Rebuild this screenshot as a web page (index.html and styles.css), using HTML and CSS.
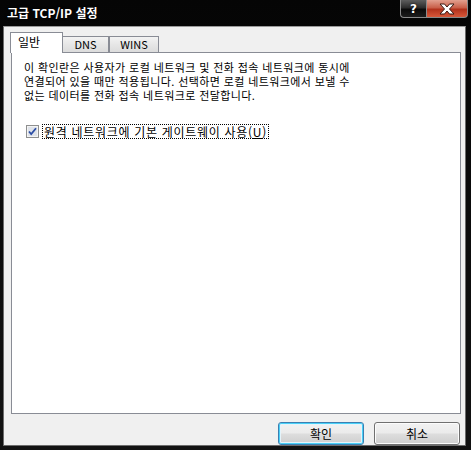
FILE: index.html
```html
<!DOCTYPE html>
<html lang="ko">
<head>
<meta charset="utf-8">
<title>고급 TCP/IP 설정</title>
<link rel="stylesheet" href="styles.css">
</head>
<body>
<div class="window">
  <div class="titlebar">
    <div class="title">고급 TCP/IP 설정</div>
    <div class="caption-btns">
      <div class="cbtn help"><span>?</span></div>
      <div class="cbtn close">
        <svg width="20" height="12" viewBox="0 0 20 12">
          <path d="M3 1 H7.5 L10 4 L12.5 1 H17 L12.5 6 L17 11 H12.5 L10 8 L7.5 11 H3 L7.5 6 Z" fill="#fff" stroke="#3a1a14" stroke-width="1" stroke-linejoin="round"/>
        </svg>
      </div>
    </div>
  </div>
  <div class="client">
    <div class="tabs">
      <div class="tab active">일반</div>
      <div class="tab first">DNS</div>
      <div class="tab">WINS</div>
    </div>
    <div class="panel">
      <p class="desc">이 확인란은 사용자가 로컬 네트워크 및 전화 접속 네트워크에 동시에<br>연결되어 있을 때만 적용됩니다. 선택하면 로컬 네트워크에서 보낼 수<br>없는 데이터를 전화 접속 네트워크로 전달합니다.</p>
      <div class="check-row">
        <span class="checkbox">
          <svg width="13" height="13" viewBox="0 0 13 13">
            <rect x="0.5" y="0.5" width="12" height="12" fill="#f4f4f4" stroke="#8e8f8f"/>
            <rect x="2" y="2" width="9" height="9" fill="#dfe3ea"/>
            <path d="M3 6.5 L5.2 9 L10 3.2" fill="none" stroke="#2c4ea5" stroke-width="1.8"/>
          </svg>
        </span>
        <span class="check-label">원격 네트워크에 기본 게이트웨이 사용(<u>U</u>)</span>
      </div>
    </div>
    <div class="buttons">
      <button class="btn default">확인</button>
      <button class="btn">취소</button>
    </div>
  </div>
</div>
</body>
</html>
```
FILE: styles.css
```css
* { box-sizing: border-box; }
html, body { margin: 0; padding: 0; }
body {
  width: 471px;
  height: 450px;
  background: #0e0e0e;
  overflow: hidden;
  font-family: "Noto Sans CJK KR", "Noto Sans", sans-serif;
}
.window {
  width: 471px;
  height: 450px;
  display: flex;
  flex-direction: column;
  padding: 0 5px 4px 3px;
  background: linear-gradient(#050505, #121212);
}
.titlebar {
  height: 26px;
  display: flex;
  justify-content: space-between;
  align-items: flex-start;
  flex: none;
}
.title {
  color: #fff;
  font-weight: bold;
  font-size: 12px;
  line-height: 14px;
  padding: 6px 0 0 4px;
  text-shadow: 0 0 3px #000;
}
.caption-btns {
  display: flex;
  margin-right: -2px;
}
.cbtn {
  height: 18px;
  border: 1px solid #8a8a8a;
  border-top: none;
  display: flex;
  align-items: center;
  justify-content: center;
}
.help {
  width: 26px;
  border-radius: 0 0 0 4px;
  border-right: none;
  background: linear-gradient(#5d5d5d 0%, #2c2c2c 45%, #0a0a0a 55%, #1c1c1c 100%);
}
.help span {
  color: #fff;
  font-family: "DejaVu Sans", sans-serif;
  font-weight: bold;
  font-size: 12px;
  line-height: 12px;
  text-shadow: 0 0 2px #000;
}
.close {
  width: 42px;
  border-radius: 0 0 4px 0;
  background: linear-gradient(#e2a08f 0%, #c9604a 45%, #b2321c 55%, #d7583a 100%);
}
.client {
  flex: 1;
  background: #f0f0f0;
  border: 1px solid #6c6c6c;
  border-top-color: #9a9a9a;
  padding: 4px 0 0 6px;
  display: flex;
  flex-direction: column;
}
.tabs {
  display: flex;
  align-items: flex-end;
  height: 21px;
  position: relative;
  z-index: 1;
}
.tab {
  height: 16px;
  border: 1px solid #898c95;
  border-bottom: none;
  background: linear-gradient(#f3f3f3, #e6e6e6 50%, #dcdcdc);
  font-family: "Noto Sans CJK KR", sans-serif;
  font-size: 11px;
  line-height: 14px;
  color: #000;
  padding: 0 8px;
  width: 50px;
  text-align: center;
}
.tab.first {
  width: 47px;
  margin-left: -1px;
}
.tab.active {
  width: 53px;
  height: 21px;
  margin-bottom: -1px;
  background: #fff;
  border-color: #898c95;
  font-size: 12px;
  line-height: 18px;
  text-align: left;
  padding-left: 7px;
  position: relative;
  z-index: 2;
}
.panel {
  width: 450px;
  height: 362px;
  margin-left: 1px;
  background: #fff;
  border: 1px solid #898c95;
  padding: 7px 0 0 12px;
}
.desc {
  margin: 0;
  font-size: 11px;
  line-height: 14px;
  letter-spacing: 0.4px;
  white-space: nowrap;
  color: #000;
}
.check-row {
  display: flex;
  align-items: center;
  margin-top: 22px;
  margin-left: 2px;
  gap: 3px;
}
.checkbox {
  display: flex;
  width: 13px;
  height: 13px;
}
.check-label {
  border: 1px dotted #000;
  font-size: 12px;
  line-height: 13px;
  letter-spacing: 0.7px;
  padding: 0 1px;
  color: #000;
  white-space: nowrap;
}
.buttons {
  display: flex;
  justify-content: flex-end;
  gap: 10px;
  margin-top: 8px;
  padding-right: 5px;
}
.btn {
  width: 86px;
  height: 23px;
  border: 1px solid #707070;
  border-radius: 3px;
  background: linear-gradient(#f2f2f2 0%, #ebebeb 48%, #dddddd 52%, #cfcfcf 100%);
  font-family: "Noto Sans CJK KR", sans-serif;
  font-size: 12px;
  line-height: 19px;
  color: #000;
  padding: 0;
  box-shadow: inset 0 0 0 1px #fcfcfc;
}
.btn.default {
  border-color: #3c7fb1;
  box-shadow: inset 0 0 0 1px #48d0f8, inset 0 0 0 2px #e4f4fb;
}
```
